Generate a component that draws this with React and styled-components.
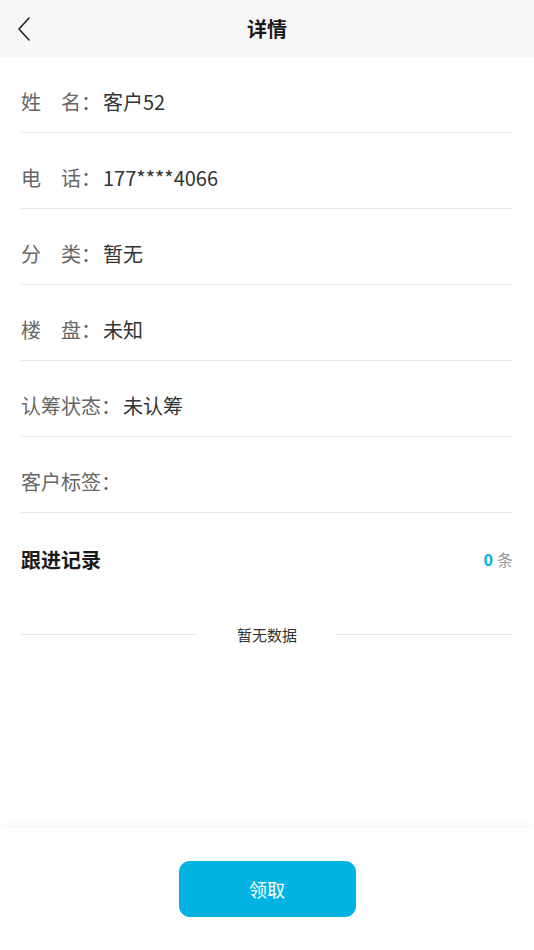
import React from "react";
import styled, { createGlobalStyle } from "styled-components";

const Global = createGlobalStyle`
  html, body { margin: 0; padding: 0; background: #fff; }
  body { font-family: "Noto Sans CJK SC", "Noto Sans", sans-serif; }
  * { box-sizing: border-box; }
`;

const Page = styled.div`
  display: flex;
  flex-direction: column;
  min-height: 100vh;
  background: #fff;
`;

const Header = styled.header`
  height: 57px;
  background: #f7f7f7;
  display: grid;
  grid-template-columns: 60px 1fr 60px;
  align-items: center;
`;

const Back = styled.button`
  border: 0;
  background: none;
  padding: 0 0 0 16px;
  height: 57px;
  display: flex;
  align-items: center;
  cursor: pointer;
`;

const Title = styled.h1`
  margin: 0;
  text-align: center;
  font-size: 20px;
  font-weight: 700;
  color: #1a1a1a;
`;

const Main = styled.main`
  flex: 1;
  padding: 0 21px;
`;

const Row = styled.div`
  height: 76px;
  display: flex;
  align-items: center;
  border-bottom: 1.5px solid #e6e6e6;
  font-size: 20px;
  padding-top: 13px;
`;

const Label = styled.span`
  color: #666;
  white-space: pre;
  margin-right: 2px;
`;

const Value = styled.span`
  color: #333;
`;

const SectionHead = styled.div`
  height: 92px;
  display: flex;
  align-items: center;
  justify-content: space-between;
`;

const SectionTitle = styled.h2`
  margin: 0;
  font-size: 20px;
  font-weight: 700;
  color: #1a1a1a;
`;

const Count = styled.span`
  font-size: 16px;
  color: #999;
  b {
    color: #00b0e6;
    font-weight: 700;
    margin-right: 4px;
  }
`;

const Empty = styled.div`
  display: flex;
  align-items: center;
  gap: 40px;
  font-size: 15px;
  color: #333;
  margin-top: 19px;
  &::before, &::after {
    content: "";
    flex: 1;
    height: 1.5px;
    background: #e6e6e6;
  }
`;

const Footer = styled.footer`
  height: 122px;
  display: flex;
  align-items: center;
  justify-content: center;
  box-shadow: 0 -4px 8px rgba(0, 0, 0, 0.03);
`;

const Claim = styled.button`
  width: 177px;
  height: 56px;
  border: 0;
  border-radius: 11px;
  background: #02b3e2;
  color: #fff;
  font-family: inherit;
  font-size: 18px;
  cursor: pointer;
`;

const rows = [
  ["姓\u3000名：", "客户52"],
  ["电\u3000话：", "177****4066"],
  ["分\u3000类：", "暂无"],
  ["楼\u3000盘：", "未知"],
  ["认筹状态：", "未认筹"],
  ["客户标签：", ""],
];

export default function App() {
  return (
    <Page>
      <Global />
      <Header>
        <Back aria-label="返回">
          <svg width="16" height="26" viewBox="0 0 16 26" fill="none">
            <path d="M13 2 L3 13 L13 24" stroke="#222" strokeWidth="1.6" strokeLinecap="round" strokeLinejoin="round" />
          </svg>
        </Back>
        <Title>详情</Title>
        <span />
      </Header>
      <Main>
        {rows.map(([l, v]) => (
          <Row key={l}>
            <Label>{l}</Label>
            <Value>{v}</Value>
          </Row>
        ))}
        <SectionHead>
          <SectionTitle>跟进记录</SectionTitle>
          <Count>
            <b>0</b>条
          </Count>
        </SectionHead>
        <Empty>暂无数据</Empty>
      </Main>
      <Footer>
        <Claim>领取</Claim>
      </Footer>
    </Page>
  );
}
